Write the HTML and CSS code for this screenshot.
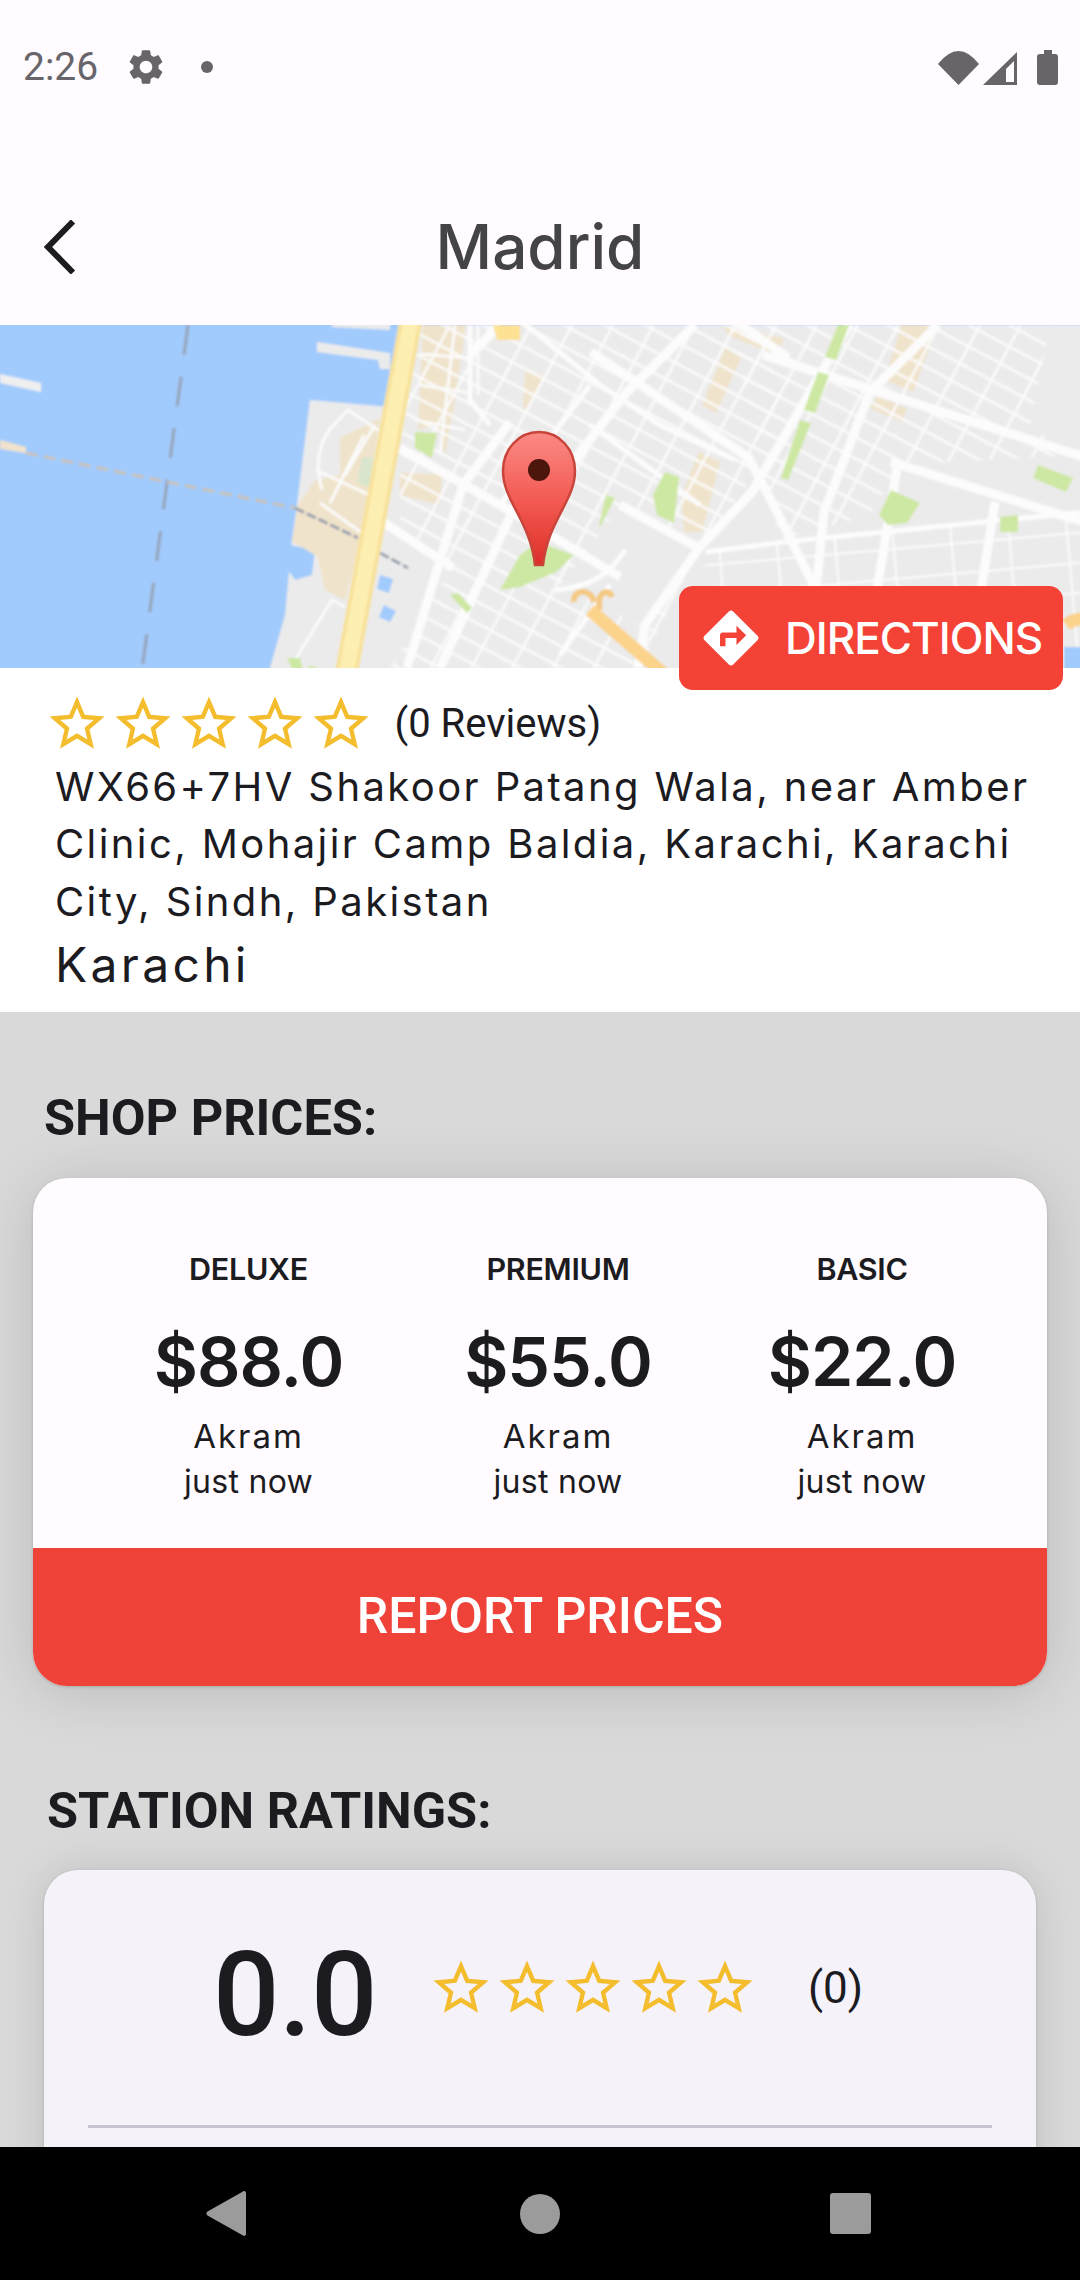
FILE: index.html
```html
<!DOCTYPE html>
<html lang="en">
<head>
<meta charset="utf-8">
<title>Madrid</title>
<link rel="stylesheet" href="styles.css">
</head>
<body>
<svg class="defs" width="0" height="0">
  <defs>
    <symbol id="star" viewBox="0 0 24 24"><path d="M22 9.24l-7.19-.62L12 2 9.19 8.63 2 9.24l5.46 4.73L5.82 21 12 17.27 18.18 21l-1.63-7.03L22 9.24zM12 15.4l-3.76 2.27 1-4.28-3.32-2.88 4.38-.38L12 6.1l1.71 4.04 4.38.38-3.32 2.88 1 4.28L12 15.4z"/></symbol>
  </defs>
</svg>
<div class="phone">
  <header class="status">
    <span class="clock">2:26</span>
    <svg class="gear" viewBox="0 0 24 24"><path d="M19.14 12.94c.04-.3.06-.61.06-.94 0-.32-.02-.64-.07-.94l2.03-1.58c.18-.14.23-.41.12-.61l-1.92-3.32c-.12-.22-.37-.29-.59-.22l-2.39.96c-.5-.38-1.03-.7-1.62-.94l-.36-2.54c-.04-.24-.24-.41-.48-.41h-3.84c-.24 0-.43.17-.47.41l-.36 2.54c-.59.24-1.13.57-1.62.94l-2.39-.96c-.22-.08-.47 0-.59.22L2.74 8.87c-.12.21-.08.47.12.61l2.03 1.58c-.05.3-.09.63-.09.94s.02.64.07.94l-2.03 1.58c-.18.14-.23.41-.12.61l1.92 3.32c.12.22.37.29.59.22l2.39-.96c.5.38 1.03.7 1.62.94l.36 2.54c.05.24.24.41.48.41h3.84c.24 0 .44-.17.47-.41l.36-2.54c.59-.24 1.13-.56 1.62-.94l2.39.96c.22.08.47 0 .59-.22l1.92-3.32c.12-.22.07-.47-.12-.61l-2.01-1.58zM12 15.6c-1.98 0-3.6-1.62-3.6-3.6s1.62-3.6 3.6-3.6 3.6 1.62 3.6 3.6-1.62 3.6-3.6 3.6z"/></svg>
    <span class="dot"></span>
    <span class="status-right">
      <svg class="wifi" viewBox="0 0 41 34"><path d="M0 13Q20.5-13 41 13L20.5 34Z"/></svg>
      <svg class="signal" viewBox="0 0 34 33"><path fill-rule="evenodd" d="M0 33L34 0V33ZM23 30H31V9L23 17Z"/></svg>
      <svg class="battery" viewBox="0 0 21 35"><path d="M7 0H15V4H18A3 3 0 0 1 21 7V32A3 3 0 0 1 18 35H3A3 3 0 0 1 0 32V7A3 3 0 0 1 3 4H7Z"/></svg>
    </span>
  </header>

  <div class="appbar">
    <svg class="back" viewBox="0 0 32 54"><path d="M29 1.500L4 27L29 52.500"/></svg>
    <h1 class="title">Madrid</h1>
  </div>

  <section class="map">
    <svg class="map-art" viewBox="0 0 1080 343" preserveAspectRatio="none">
      <defs>
        <pattern id="gridA" width="36" height="19" patternUnits="userSpaceOnUse" patternTransform="rotate(28)">
          <rect class="m-minor" x="0" y="0" width="36" height="2.500"/>
          <rect class="m-minor" x="0" y="0" width="2.500" height="19"/>
        </pattern>
        <pattern id="gridB" width="58" height="30" patternUnits="userSpaceOnUse" patternTransform="rotate(-5)">
          <rect class="m-minor" x="0" y="0" width="58" height="2"/>
          <rect class="m-minor" x="0" y="0" width="2" height="30"/>
        </pattern>
        <linearGradient id="pinFill" x1="0" y1="0" x2="0" y2="1">
          <stop offset="0" stop-color="#fb8a85"/>
          <stop offset="0.55" stop-color="#f2574f"/>
          <stop offset="1" stop-color="#dd2f2a"/>
        </linearGradient>
        <filter id="soft"><feGaussianBlur stdDeviation="0.9"/></filter>
        <filter id="softer"><feGaussianBlur stdDeviation="0.6"/></filter>
      </defs>
      <g filter="url(#soft)">
        <rect class="m-water" x="-5" y="-5" width="1095" height="355"/>
        <polygon class="m-land" points="310,75 390,82 412,0 1090,0 1090,350 268,350 285,290 292,215 297,180"/>
        <polygon class="m-water" points="290,220 315,225 312,250 295,255 288,245"/>
        <polygon class="m-land" points="317,17 390,28 390,44 380,44 378,35 317,27"/>
        <polygon class="m-land" points="332,-4 390,-4 390,5 332,2"/>
        <polygon class="m-island" points="0,49 41,58 41,67 0,58"/>
        <polygon class="m-sand" points="0,115 26,122 26,128 0,124"/>

        <polygon class="m-sand" points="340,113 380,93 367,170 362,210 345,275 325,265 318,232 292,216 298,180 315,155 340,150"/>
        <polygon class="m-sand" points="423,0 466,0 455,75 445,130 437,100 418,105"/>
        <polygon class="m-sand" points="400,147 442,150 440,180 400,170"/>
        <polygon class="m-sand" points="525,47 547,50 523,87"/>
        <polygon class="m-sand" points="725,23 741,33 716,88 702,80"/>
        <polygon class="m-sand" points="724,2 784,13 777,30 727,10"/>
        <polygon class="m-sand" points="902,0 938,0 913,67 884,55"/>
        <polygon class="m-sand" points="877,72 907,83 902,97 870,83"/>
        <polygon class="m-sand" points="699,127 720,137 702,207 684,207 681,173"/>

        <polygon class="m-grid-a" points="400,0 760,0 790,100 700,225 640,343 368,343 400,200"/>
        <polygon class="m-grid-a" points="730,0 1080,0 1080,130 900,140 870,190 780,215"/>
        <polygon class="m-grid-b" points="706,228 1080,188 1080,343 690,343"/>
        <polygon class="m-land" points="1050,0 1080,0 1080,125 1030,105"/>
        <polygon class="m-land" points="900,137 1000,170 985,195 880,200"/>
        <polygon class="m-land" points="620,182 695,226 640,300 560,260"/>
        <polygon class="m-land" points="750,165 775,210 710,222"/>
        <polygon class="m-land" points="400,200 452,243 390,343 362,343"/>

        <path class="m-thin" d="M330 104L348 85L381 107M330 104C318 120 315 140 322 165M345 150L375 100M330 178L364 110M316 145L380 175M320 178L362 208M295 335L332 275L345 282"/>
        <path class="m-thin" d="M420 29L470 33M420 60L470 68M415 95L465 105M455 0L440 130M478 0V70"/>

        <path class="m-major" d="M400 123L500 180L620 252M383 197L453 243M591 27L749 133L777 187L816 265M763 30L1090 134M891 137L1090 199M734 -5L788 33M620 180L699 223"/>
        <path class="m-major" d="M510 97L463 160L407 343M520 170L440 343M695 0L627 67L549 167M849 0L752 167L699 223L645 300L638 343M938 0L870 67L824 187L816 265M898 137L877 265M995 177L981 265M470 30L500 0"/>
        <path class="m-mid" d="M706 227L784 217L984 197L1085 187M520 -5L600 60L660 100L735 135M500 180L590 60M555 265C590 262 610 250 625 225M610 260L560 330M470 0V75L490 100M590 100L700 180"/>

        <polygon class="m-park" points="838,0 849,0 836,35 825,32"/>
        <polygon class="m-park" points="818,47 829,50 815,88 804,85"/>
        <polygon class="m-park" points="800,95 811,98 788,155 781,153"/>
        <polygon class="m-park" points="665,147 679,152 674,198 657,190 653,170"/>
        <polygon class="m-park" points="606,170 615,173 600,202 599,200"/>
        <polygon class="m-park" points="538,217 574,230 556,247 520,262 500,265 520,230"/>
        <polygon class="m-park" points="891,165 920,178 907,198 888,200 879,190"/>
        <polygon class="m-park" points="1000,192 1018,190 1018,207 1000,207"/>
        <polygon class="m-park" points="1038,140 1073,153 1066,167 1033,153"/>
        <polygon class="m-park" points="415,107 437,108 432,133 415,123"/>
        <polygon class="m-park" points="450,270 458,268 472,283 467,288"/>
        <polygon class="m-park" points="287,333 300,333 303,345 293,345"/>
        <polygon class="m-park" points="308,340 323,345 310,345"/>
        <polygon class="m-pale" points="362,133 373,132 370,163 357,157"/>
        <polygon class="m-water" points="380,250 393,254 389,268 377,264"/>
        <polygon class="m-water" points="384,280 396,286 390,297 379,292"/>

        <path class="m-ferry" d="M188 0L142 345"/>
        <path class="m-sandline" d="M26 128L295 183"/>
        <path class="m-grayline" d="M295 183L358 213M380 228L408 243"/>
        <path class="m-road-edge" d="M411 -5L346 350"/>
        <path class="m-road" d="M411 -5L346 350"/>
        <path class="m-ramp-edge" d="M590 285L665 350M574 277C572 265 590 262 594 277M600 285C596 268 608 262 612 272"/>
        <path class="m-ramp" d="M590 285L665 350"/>
        <polygon class="m-yellow" points="493,0 520,0 520,15 497,15"/>
        <path class="m-ramp" d="M1066 300C1072 295 1076 294 1085 294"/>
        <rect class="m-water" x="1064" y="322" width="25" height="30"/>
      </g>
      <g filter="url(#softer)">
        <path class="pin" d="M539 107C519 107 503 124 503 146C503 176 530 195 535 240H543C548 195 575 176 575 146C575 124 559 107 539 107Z"/>
        <ellipse class="pin-dot" cx="539" cy="145" rx="11" ry="11"/>
      </g>
    </svg>
    <button class="directions">
      <svg class="dir-icon" viewBox="0 0 24 24"><path d="M21.71 11.29l-9-9c-.39-.39-1.02-.39-1.41 0l-9 9c-.39.39-.39 1.02 0 1.41l9 9c.39.39 1.02.39 1.41 0l9-9c.39-.38.39-1.01 0-1.41zM14 14.5V12h-4v3H8v-4c0-.55.45-1 1-1h5V7.5l3.5 3.500-3.500 3.500z"/></svg>
      <span class="dir-label">DIRECTIONS</span>
    </button>
  </section>

  <section class="info">
    <div class="rating-row">
      <span class="stars">
        <svg class="star"><use href="#star"/></svg><svg class="star"><use href="#star"/></svg><svg class="star"><use href="#star"/></svg><svg class="star"><use href="#star"/></svg><svg class="star"><use href="#star"/></svg>
      </span>
      <span class="reviews">(0 Reviews)</span>
    </div>
    <p class="address">WX66+7HV Shakoor Patang Wala, near Amber Clinic, Mohajir Camp Baldia, Karachi, Karachi City, Sindh, Pakistan</p>
    <p class="city">Karachi</p>
  </section>

  <main class="content">
    <h2 class="section-title shop-title">SHOP PRICES:</h2>
    <div class="price-card">
      <div class="price-grid">
        <div class="price-col">
          <span class="grade">DELUXE</span>
          <span class="amount">$88.0</span>
          <span class="who">Akram</span>
          <span class="when">just now</span>
        </div>
        <div class="price-col">
          <span class="grade">PREMIUM</span>
          <span class="amount">$55.0</span>
          <span class="who">Akram</span>
          <span class="when">just now</span>
        </div>
        <div class="price-col">
          <span class="grade">BASIC</span>
          <span class="amount">$22.0</span>
          <span class="who">Akram</span>
          <span class="when">just now</span>
        </div>
      </div>
      <div class="report">REPORT PRICES</div>
    </div>

    <h2 class="section-title station-title">STATION RATINGS:</h2>
    <div class="rating-card">
      <div class="score-row">
        <span class="score">0.0</span>
        <span class="stars">
          <svg class="star"><use href="#star"/></svg><svg class="star"><use href="#star"/></svg><svg class="star"><use href="#star"/></svg><svg class="star"><use href="#star"/></svg><svg class="star"><use href="#star"/></svg>
        </span>
        <span class="count">(0)</span>
      </div>
      <div class="divider"></div>
    </div>
  </main>

  <nav class="navbar">
    <svg class="nav-back" viewBox="0 0 40 45"><path d="M37 .5C38.500-.5 40 .5 40 2V43C40 44.500 38.500 45.500 37 44.500L1.500 24.500C0 23.500 0 21.500 1.500 20.500Z"/></svg>
    <span class="nav-home"></span>
    <span class="nav-recent"></span>
  </nav>
</div>
</body>
</html>
```

FILE: styles.css
```css
* { box-sizing: border-box; }
html, body { margin: 0; padding: 0; }
body { width: 1080px; height: 2280px; overflow: hidden; font-family: "Inter", "Liberation Sans", sans-serif; color: #1c1b1f; }
.defs { display: block; height: 0; }
.phone { width: 1080px; height: 2280px; display: flex; flex-direction: column; overflow: hidden; background: #fffbfe; }

/* status bar */
.status { height: 100px; flex: none; display: flex; align-items: center; padding: 34px 22px 0 23px; color: #67646a; }
.clock { font: 400 39px/66px "Roboto", sans-serif; width: 86px; color: #67646a; }
.gear { width: 42px; height: 42px; fill: #67646a; margin-left: 16px; }
.dot { width: 12px; height: 12px; border-radius: 50%; background: #67646a; margin-left: 34px; }
.status-right { margin-left: auto; display: flex; align-items: flex-start; }
.wifi { width: 41px; height: 34px; fill: #67646a; margin-top: 1px; }
.signal { width: 34px; height: 33px; fill: #67646a; margin: 2px 0 0 4px; }
.battery { width: 21px; height: 35px; fill: #67646a; margin-left: 20px; }

/* app bar */
.appbar { height: 225px; flex: none; position: relative; display: flex; align-items: flex-start; justify-content: center; padding-top: 107px; }
.back { position: absolute; left: 44px; top: 120px; width: 32px; height: 54px; fill: none; stroke: #1c1b1f; stroke-width: 6; }
.title { margin: 0; font: 500 62px/80px "Inter", sans-serif; letter-spacing: 0; color: #444345; }

/* map */
.map { height: 343px; flex: none; position: relative; }
.map-art { display: block; width: 1080px; height: 343px; }
.m-water { fill: #a2cbfd; }
.m-land { fill: #ebebeb; }
.m-island { fill: #efefef; }
.m-sand { fill: #f0e3cb; }
.m-park { fill: #cde8a2; }
.m-pale { fill: #d9e5cd; }
.m-grid-a { fill: url(#gridA); }
.m-grid-b { fill: url(#gridB); }
.m-minor { fill: #fbfbfb; }
.m-thin { fill: none; stroke: #fbfbfb; stroke-width: 3; }
.m-major { fill: none; stroke: #fcfcfc; stroke-width: 9; }
.m-mid { fill: none; stroke: #fcfcfc; stroke-width: 5; }
.m-ferry { fill: none; stroke: #96a7bf; stroke-width: 3.500; stroke-dasharray: 30 22; }
.m-sandline { fill: none; stroke: #c9c2b5; stroke-width: 3; stroke-dasharray: 12 6; }
.m-grayline { fill: none; stroke: #9aa0ad; stroke-width: 3; stroke-dasharray: 10 3; }
.m-road-edge { fill: none; stroke: #f8e29b; stroke-width: 23; }
.m-road { fill: none; stroke: #fdeeb2; stroke-width: 15; }
.m-ramp-edge { fill: none; stroke: #f4c983; stroke-width: 6; }
.m-ramp { fill: none; stroke: #fcd38b; stroke-width: 13; }
.m-yellow { fill: #fde293; }
.pin { fill: url(#pinFill); stroke: #c9443b; stroke-width: 2.500; }
.pin-dot { fill: #4d120e; }

.directions { position: absolute; left: 679px; top: 261px; width: 384px; height: 104px; border: 0; border-radius: 14px; background: #f44336; color: #fff; display: flex; align-items: center; padding: 0 0 0 19px; }
.dir-icon { width: 66px; height: 66px; fill: #fff; flex: none; }
.dir-label { font: 500 44px/60px "Inter", sans-serif; letter-spacing: -1px; margin-left: 21px; white-space: nowrap; }

/* info */
.info { height: 344px; flex: none; background: #fff; padding: 22.500px 0 0 0; }
.rating-row { display: flex; align-items: center; height: 66px; padding-left: 43.500px; }
.stars { display: flex; flex: none; }
.star { width: 66px; height: 66px; fill: #f3bd2e; display: block; }
.reviews { font: 400 40px/50px "Roboto", sans-serif; margin-left: 21px; }
.address { margin: 1px 0 0; padding: 0 30px 0 55px; font: 400 40px/57.600px "Inter", sans-serif; letter-spacing: 2.400px; }
.city { margin: 4px 0 0; padding-left: 55px; font: 400 48px/62px "Inter", sans-serif; letter-spacing: 3.300px; }

/* content */
.content { flex: 1; min-height: 0; background: #dad9da; overflow: hidden; padding-top: 76px; }
.section-title { margin: 0; font: 700 50.500px/60px "Roboto", sans-serif; color: #1c1b1f; }
.shop-title { padding-left: 44px; }
.station-title { padding-left: 47px; margin-top: 95px; }

.price-card { margin: 30px 33px 0; height: 508px; border-radius: 34px; background: #fffbfe; box-shadow: 0 6px 60px rgba(0,0,0,.14), 0 1px 3px rgba(0,0,0,.15); overflow: hidden; display: flex; flex-direction: column; }
.price-grid { flex: none; height: 370px; padding: 71px 0 0 122px; display: grid; grid-template-columns: 187px 187px 176px; column-gap: 122.500px; align-content: start; }
.price-col { display: flex; flex-direction: column; align-items: center; white-space: nowrap; }
.grade { font: 600 30.500px/40px "Inter", sans-serif; letter-spacing: -.3px; }
.amount { font: 600 68px/90px "Inter", sans-serif; margin-top: 27px; letter-spacing: -1px; }
.who { font: 400 33px/46px "Inter", sans-serif; letter-spacing: 2px; margin-top: 7px; }
.when { font: 400 32px/46px "Inter", sans-serif; letter-spacing: .3px; }
.report { flex: 1; background: #ef4339; color: #fff; display: flex; align-items: center; justify-content: center; font: 500 50px/60px "Roboto", sans-serif; padding-bottom: 2px; }

.rating-card { margin: 29px 44px 0; height: 400px; border-radius: 34px 34px 0 0; background: #f5f2fa; box-shadow: 0 0 40px rgba(0,0,0,.12), 0 1px 3px rgba(0,0,0,.15); padding-top: 48px; }
.score-row { display: flex; align-items: center; height: 140px; padding-left: 169px; }
.score { font: 500 117px/140px "Roboto", sans-serif; padding-top: 14px; width: 215px; letter-spacing: -.5px; }
.count { font: 400 44px/50px "Roboto", sans-serif; margin-left: 50px; }
.divider { height: 3px; background: #cac4d0; margin: 67px 44px 0; }

/* nav */
.navbar { height: 133px; flex: none; background: #000; display: flex; align-items: center; justify-content: space-between; padding: 0 209px 0 206px; }
.nav-back { width: 40px; height: 45px; fill: #9b9b9b; }
.nav-home { width: 40px; height: 40px; border-radius: 50%; background: #9b9b9b; margin-left: 3px; }
.nav-recent { width: 41px; height: 41px; border-radius: 3px; background: #9b9b9b; }
```
